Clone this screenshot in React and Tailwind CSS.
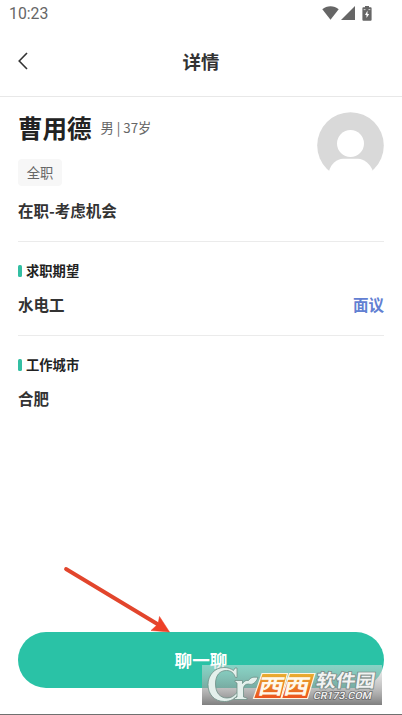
const IconWifi = ({ className }) => (
    <svg className={className} viewBox="0 0 17 14" fill="currentColor">
        <path d="M0.3 3.2C2.6 1.2 5.4 0.2 8.5 0.2s5.9 1 8.2 3L8.5 13.8z" />
    </svg>
)
const IconSignal = ({ className }) => (
    <svg className={className} viewBox="0 0 14 14" fill="currentColor">
        <path d="M14 0v14H0z" />
    </svg>
)
const IconBattery = ({ className }) => (
    <svg className={className} viewBox="0 0 10 15" fill="currentColor">
        <path fillRule="evenodd" d="M3 0h4v1.200h1.600Q9.600 1.200 9.600 2.200v11.600q0 1-1 1H1.400q-1 0-1-1V2.200q0-1 1-1H3zM5.500 4.500L3 8.900h1.500V12L7.200 7.900h-1.700z" />
        <path d="M1.700 3.600h1.800M6.500 3.600h1.800" stroke="#ddd" strokeWidth="0.9" />
    </svg>
)
const IconBack = ({ className }) => (
    <svg className={className} viewBox="0 0 10 18" fill="none" stroke="currentColor" strokeWidth={1.6}>
        <path d="M9 1L1.2 9L9 17" />
    </svg>
)

const Avatar = () => (
    <svg className="w-[67px] h-[67px] shrink-0" viewBox="0 0 67 67">
        <defs>
            <clipPath id="avatar">
                <circle cx="33.5" cy="33.5" r="33.3" />
            </clipPath>
        </defs>
        <g clipPath="url(#avatar)">
            <rect width="67" height="59" fill="#d9d9d9" />
            <circle cx="33.5" cy="31.5" r="13.5" fill="#fff" />
            <path d="M12 59C14 51.500 20 47 26 46.700h15C47 47 53 51.500 56 59v1H12z" fill="#fff" />
        </g>
    </svg>
)

const SectionTitle = ({ children }) => (
    <div className="flex items-center h-5">
        <span className="w-1 h-3 rounded-[1.5px] bg-[#33bfa3]" />
        <h2 className="ml-1 text-[13.3px] leading-5 font-bold text-[#222]">{children}</h2>
    </div>
)

const Watermark = () => (
    <svg className="absolute left-[202px] top-[665px] w-[180px] h-10" viewBox="0 0 180 40">
        <defs>
            <linearGradient id="shade" x1="0" y1="0" x2="0" y2="1">
                <stop offset="0" stopColor="#e4e4e4" stopOpacity="0.5" />
                <stop offset="0.55" stopColor="#a2a2a2" stopOpacity="0.65" />
                <stop offset="1" stopColor="#747474" stopOpacity="0.92" />
            </linearGradient>
            <linearGradient id="orange" x1="0" y1="0" x2="0" y2="1">
                <stop offset="0" stopColor="#e8b030" />
                <stop offset="1" stopColor="#ec501c" />
            </linearGradient>
        </defs>
        <rect width="180" height="40" fill="url(#shade)" />
        <g fill="#e4f0ec" stroke="#6f8f87" strokeWidth="0.8">
            <path d="M35 3v9.500h-1.600C32 8 29 5.500 24.500 5.500c-7 0-11 5-11 13.500s4.500 14 11.500 14c4.500 0 7-2 10-5.500l1.500 1.500C33 34 28.500 36.500 22.500 36.500 12 36.500 6 29 6 19.500S13 2.500 22 2.500c4 0 7 1.200 9.500 3L33 3z" />
            <path d="M33 15.500h7.500v3C42 16 44 15 46.500 15.500c2-3 5-4 9.500-3-2 5-5.500 8-9.500 6.500-3.500 0-5 2-5 5v8l3.500 1V34.500H32.500V33l2.500-1V18L33 17z" />
        </g>
        <g stroke="#fff3df" strokeWidth="1.2" fill="url(#orange)">
            <path d="M60 8.500h25.500L79 33.500H51.500z" />
            <path d="M87.500 8.500H113l-7.500 25H79.500z" />
        </g>
        <g fontFamily="'Noto Sans CJK SC', sans-serif">
            <text transform="translate(55 28.500) skewX(-13)" fontSize="21" fontWeight="700" textLength="51" lengthAdjust="spacingAndGlyphs" fill="#fff8ea">西西</text>
            <text transform="translate(113.500 22) skewX(-8)" fontSize="18" fontWeight="700" textLength="59" lengthAdjust="spacingAndGlyphs" fill="#f1f3f2" stroke="#7c8a86" strokeWidth="1.6" paintOrder="stroke">软件园</text>
        </g>
        <text transform="translate(111 33.500) skewX(-12)" fontFamily="Roboto, sans-serif" fontWeight="500" fontSize="10" textLength="58" lengthAdjust="spacingAndGlyphs" fill="#f4f4f4" stroke="#6a6a6a" strokeWidth="1.5" paintOrder="stroke">CR173.COM</text>
    </svg>
)

export default function App() {
    return (
        <main className="relative w-[402px] h-[715px] flex flex-col overflow-hidden bg-white text-[#333] font-['Noto_Sans_CJK_SC',sans-serif]">

            {/* 状态栏 */}
            <div className="h-7 pl-[9px] pr-[30px] flex items-center justify-between text-[#666]">
                <span className="font-[Roboto,sans-serif] text-[15.8px] leading-7">10:23</span>
                <div className="flex items-center pb-0.5">
                    <IconWifi className="w-[17px] h-[14px]" />
                    <IconSignal className="w-[14px] h-[14px] ml-0.5" />
                    <IconBattery className="w-[10px] h-[15px] ml-[7px]" />
                </div>
            </div>

            {/* 标题 */}
            <header className="h-[69px] grid grid-cols-[1fr_auto_1fr] items-center border-b border-[#e8e8e8] pb-0.5">
                <button className="ml-[18px] w-5 h-6 flex items-center">
                    <IconBack className="w-[10px] h-[18px]" />
                </button>
                <h1 className="pb-px text-[18.4px] font-bold leading-6">详情</h1>
            </header>

            <div className="px-[18px] flex flex-col">
                <section className="h-[145px] pt-[15px] flex justify-between border-b border-[#ebebeb]">
                    <div>
                        <div className="flex items-center h-8">
                            <span className="text-[24.5px] leading-8 font-bold text-[#222]">曹用德</span>
                            <span className="ml-[9px] text-[13.3px] leading-8 text-[#666]">男 | 37岁</span>
                        </div>
                        <span className="mt-[15px] pt-px w-11 h-[27px] flex items-center justify-center rounded bg-[#f7f7f7] text-[13.3px] text-[#666]">全职</span>
                        <p className="mt-3 text-[15.5px] leading-6 font-bold">在职-考虑机会</p>
                    </div>
                    <Avatar />
                </section>

                <section className="h-[94px] pt-[19px] border-b border-[#ebebeb]">
                    <SectionTitle>求职期望</SectionTitle>
                    <div className="mt-[11px] flex justify-between text-[15.5px] leading-6 font-bold">
                        <span>水电工</span>
                        <span className="text-[#6280d2]">面议</span>
                    </div>
                </section>

                <section className="pt-[19px]">
                    <SectionTitle>工作城市</SectionTitle>
                    <p className="mt-[11px] text-[15.5px] leading-6 font-bold">合肥</p>
                </section>
            </div>

            <button className="mt-auto mb-[27px] mx-[18px] h-14 shrink-0 rounded-full bg-[#2ac2a6] text-white text-[17.6px] font-bold">
                聊一聊
            </button>

            {/* 指向按钮的箭头 */}
            <svg className="absolute left-[60px] top-[562px] w-[112px] h-[74px]" viewBox="0 0 112 74">
                <path d="M6 7L99 63" stroke="#e2452c" strokeWidth="3.800" strokeLinecap="round" />
                <path d="M109.500 70L99.500 54.500l-1.500 7.500-7 6.500z" fill="#ee4027" stroke="#ee4027" strokeWidth="0.500" />
            </svg>

            <Watermark />
            <div className="absolute inset-x-0 bottom-0 h-px bg-[#707070]" />
        </main>
    )
}
